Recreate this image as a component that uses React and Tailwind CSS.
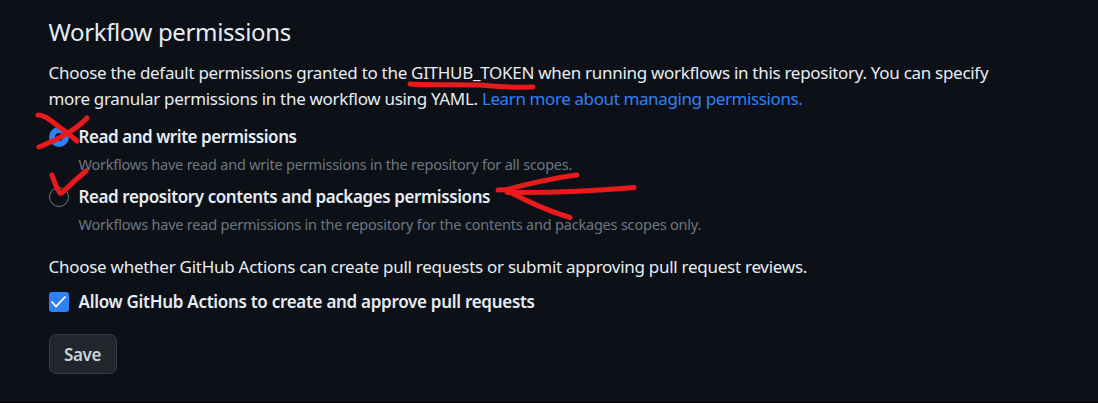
const stroke = { fill: 'none', stroke: '#e81a1c', strokeWidth: 5, strokeLinecap: 'round', strokeLinejoin: 'round' };

function Annotations() {
  return (
    <svg className="pointer-events-none absolute left-0 top-0" width="1098" height="403" viewBox="0 0 1098 403" {...stroke}>
      <path d="M410 84 C430 85 455 84.500 480 85 C500 87 515 87.500 533 87" />
      <path d="M38 115 C47 115 54 124 62 129 C68 133 72 137 77 141" />
      <path d="M39 147 C54 141 75 131 87 118" />
      <path d="M52 175 C54 180 56 188 60 193 Q61 194 64 191 Q75 180 86 171" />
      <path d="M577 175 C552 178 528 184 507 189.500 L498 190 M507 192.500 C550 193 595 191 634 187.500 M507 190.500 C530 203 548 211 570 217.500" />
    </svg>
  );
}

function Radio({ checked }) {
  return (
    <span className={checked
      ? 'size-5 shrink-0 rounded-full border-[6px] border-[#2f81f7] bg-[#0d1117]'
      : 'size-5 shrink-0 rounded-full border border-[#6e7681]'} />
  );
}

function Option({ checked, title, description, titleClass, descriptionClass }) {
  return (
    <div className="h-[60px]">
      <div className="flex h-[26px] items-center gap-[10px]">
        <Radio checked={checked} />
        <span className={`text-[17px] font-semibold ${titleClass}`}>{title}</span>
      </div>
      <p className={`ml-[30px] mt-[2px] text-[14.500px] leading-[24px] text-[#6e7681] ${descriptionClass}`}>{description}</p>
    </div>
  );
}

export default function App() {
  return (
    <main className="relative h-[403px] w-[1098px] overflow-hidden whitespace-nowrap border-b border-[#030408] bg-[#0d1117] pl-[48.500px] pt-[13px] font-['Noto_Sans',sans-serif] text-[#e6edf3]">
      <h2 className="h-[47px] text-[24px] font-normal leading-[37px] tracking-[-0.36px]"><span>Workflow permissions</span></h2>
      <div className="text-[17px] leading-[26px]">
        <p><span className="tracking-[-0.295px]">Choose the default permissions granted to the GITHUB_TOKEN when running workflows in this repository. You can specify</span></p>
        <p><span className="tracking-[-0.31px]">more granular permissions in the workflow using YAML. <a className="tracking-[-0.390px] text-[#2f81f7]">Learn more about managing permissions.</a></span></p>
      </div>
      <div className="mt-[12px]">
        <Option checked title="Read and write permissions" description="Workflows have read and write permissions in the repository for all scopes." titleClass="tracking-[-0.45px]" descriptionClass="tracking-[-0.22px]" />
        <Option title="Read repository contents and packages permissions" description="Workflows have read permissions in the repository for the contents and packages scopes only." titleClass="tracking-[-0.41px]" descriptionClass="tracking-[-0.205px]" />
      </div>
      <p className="mt-[10px] text-[17px] leading-[26px] tracking-[-0.27px]">Choose whether GitHub Actions can create pull requests or submit approving pull request reviews.</p>
      <div className="mt-[9px] flex h-[26px] items-center gap-[10px]">
        <span className="flex size-5 items-center justify-center rounded-[3px] bg-[#2f81f7]">
          <svg width="20" height="20" viewBox="0 0 20 20" fill="none" stroke="white" strokeWidth="1.800"><path d="M2.500 9.500 L7 14.500 L16.500 4.500" /></svg>
        </span>
        <span className="text-[17px] font-semibold tracking-[-0.29px]">Allow GitHub Actions to create and approve pull requests</span>
      </div>
      <button className="mt-[19px] flex h-10 w-[68px] items-center justify-center rounded-[7px] border border-[#363b42] bg-[#21262d] pt-[2px] text-[17px] font-semibold tracking-[-0.4px] text-[#c9d1d9]">Save</button>
      <Annotations />
    </main>
  );
}
